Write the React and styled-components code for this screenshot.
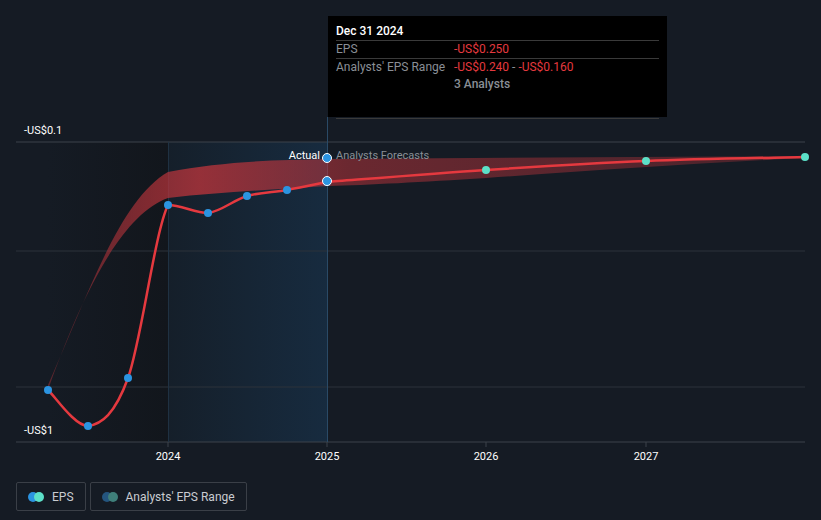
import React from "react";
import styled, { createGlobalStyle } from "styled-components";

const Global = createGlobalStyle`
  html, body { margin: 0; background: #151b24; }
  body { font-family: Roboto, "Liberation Sans", sans-serif; }
`;

const Page = styled.div`
  width: 821px; height: 520px; position: relative; background: #151b24; overflow: hidden;
`;
const ChartArea = styled.div`position: relative; width: 821px; height: 470px;`;
const Svg = styled.svg`position: absolute; left: 0; top: 0;`;
const Tooltip = styled.div`
  position: absolute; left: 328px; top: 16px; width: 339px; height: 101px;
  background: #000; padding: 6px 8px 0; box-sizing: border-box; font-size: 12px;
`;
const TTitle = styled.div`color: #fff; font-weight: 500; height: 18px; line-height: 18px; border-bottom: 1px solid #3a3a3a;`;
const TRow = styled.div`
  display: grid; grid-template-columns: 118px 1fr; height: 17px; line-height: 17px;
  border-bottom: ${p => (p.$line ? "1px solid #3a3a3a" : "none")};
`;
const TLabel = styled.span`color: #8a8f96;`;
const TVal = styled.span`color: ${p => p.$c || "#e5393f"}; font-weight: ${p => p.$w || 400};`;
const TSpacer = styled.div`height: 25px; border-bottom: 1px solid #3a3a3a;`;
const Legend = styled.div`display: flex; gap: 4px; padding: 12px 16px 0;`;
const LegendBtn = styled.div`
  display: flex; align-items: center; gap: 8px; height: 27px; padding: 0 11px 0 11px;
  border: 1px solid #3a3f47; border-radius: 2px; color: #c9ccd1; font-size: 12px;
`;
const Dots = styled.span`display: inline-flex;`;
const Dot = styled.span`width: 10px; height: 10px; border-radius: 50%; background: ${p => p.$c}; margin-left: ${p => p.$o || 0}px;`;

const past = [[48,390],[88,426],[128,378],[168,205],[208,213],[247,196],[287,190],[327,182]];
const fut = [[327,182],[486,170],[646,161],[805,157]];

const clamp = (v, a, b) => Math.max(Math.min(a, b), Math.min(Math.max(a, b), v));
function smooth(pts) {
  let d = `M${pts[0][0]},${pts[0][1]}`;
  for (let i = 0; i < pts.length - 1; i++) {
    const p0 = pts[i - 1] || pts[i], p1 = pts[i], p2 = pts[i + 1], p3 = pts[i + 2] || p2;
    const c1 = [p1[0] + (p2[0] - p0[0]) / 6, clamp(p1[1] + (p2[1] - p0[1]) / 6, p1[1], p2[1])];
    const c2 = [p2[0] - (p3[0] - p1[0]) / 6, clamp(p2[1] - (p3[1] - p1[1]) / 6, p1[1], p2[1])];
    d += ` C${c1[0]},${c1[1]} ${c2[0]},${c2[1]} ${p2[0]},${p2[1]}`;
  }
  return d;
}

const band = "M48,385 C90,290 120,200 168,172 C220,162 270,160 327,159 L805,156 L805,158 C700,163 600,170 486,178 C420,182 370,185 327,186 C270,190 220,192 168,198 C120,215 80,300 48,390 Z";
const txt = { fontFamily: "Roboto, 'Liberation Sans', sans-serif", fontSize: 11 };

export default function App() {
  return (
    <Page>
      <Global />
      <ChartArea>
        <Svg width="821" height="470">
          <defs>
            <linearGradient id="pastG" x1="0" x2="1">
              <stop offset="0" stopColor="#151b24" />
              <stop offset="1" stopColor="#12161c" />
            </linearGradient>
            <linearGradient id="hiG" x1="0" x2="1">
              <stop offset="0" stopColor="#151f2a" />
              <stop offset="1" stopColor="#172b3f" />
            </linearGradient>
            <linearGradient id="bandG" x1="0" x2="1">
              <stop offset="0" stopColor="#c0353c" stopOpacity="0.4" />
              <stop offset="0.2" stopColor="#c0353c" stopOpacity="0.75" />
              <stop offset="0.4" stopColor="#c0353c" stopOpacity="0.5" />
              <stop offset="1" stopColor="#c0353c" stopOpacity="0.3" />
            </linearGradient>
          </defs>
          <rect x="48" y="142" width="120" height="300" fill="url(#pastG)" />
          <rect x="168" y="142" width="159" height="300" fill="url(#hiG)" />
          <line x1="16" x2="805" y1="142" y2="142" stroke="#3d434b" />
          <line x1="16" x2="805" y1="251" y2="251" stroke="#2c323a" />
          <line x1="16" x2="805" y1="387" y2="387" stroke="#2c323a" />
          <line x1="16" x2="805" y1="442" y2="442" stroke="#3d434b" />
          <line x1="327.5" x2="327.5" y1="117" y2="442" stroke="#2a4a66" />
          <line x1="168.5" x2="168.5" y1="142" y2="442" stroke="#1f3142" />
          <path d={band} fill="url(#bandG)" />
          <path d={smooth(past)} fill="none" stroke="#e5393f" strokeWidth="2.5" />
          <path d={smooth(fut)} fill="none" stroke="#e5393f" strokeWidth="2.5" />
          {past.map(([x, y], i) => <circle key={i} cx={x} cy={y} r="4" fill="#2b94e1" />)}
          {fut.slice(1).map(([x, y], i) => <circle key={i} cx={x} cy={y} r="4" fill="#5ce0c8" />)}
          <circle cx="327" cy="158" r="4.5" fill="#2b94e1" stroke="#fff" strokeWidth="1" />
          <circle cx="327" cy="181" r="4.5" fill="#2b94e1" stroke="#fff" strokeWidth="1" />
          <text x="320" y="159" textAnchor="end" fill="#fff" style={txt}>Actual</text>
          <text x="336" y="159" fill="#8a8f96" style={txt}>Analysts Forecasts</text>
          <text x="24" y="134" fill="#fff" style={txt}>-US$0.1</text>
          <text x="24" y="434" fill="#fff" style={txt}>-US$1</text>
          {[["2024",168],["2025",327],["2026",486],["2027",646]].map(([t, x]) => (
            <g key={t}>
              <line x1={x} x2={x} y1="442" y2="447" stroke="#3d434b" />
              <text x={x} y="460" textAnchor="middle" fill="#fff" style={txt}>{t}</text>
            </g>
          ))}
        </Svg>
        <Tooltip>
          <TTitle>Dec 31 2024</TTitle>
          <TRow $line><TLabel>EPS</TLabel><TVal>-US$0.250</TVal></TRow>
          <TRow><TLabel>Analysts' EPS Range</TLabel><TVal>-US$0.240 <TVal $c="#8a8f96">-</TVal> -US$0.160</TVal></TRow>
          <TRow><span /><TVal $c="#8a8f96" $w={500}>3 Analysts</TVal></TRow>
          <TSpacer />
        </Tooltip>
      </ChartArea>
      <Legend>
        <LegendBtn><Dots><Dot $c="#2b94e1" /><Dot $c="#5ce0c8" $o={-4} /></Dots>EPS</LegendBtn>
        <LegendBtn><Dots><Dot $c="#24557f" /><Dot $c="#3f7f7a" $o={-4} /></Dots>Analysts' EPS Range</LegendBtn>
      </Legend>
    </Page>
  );
}
